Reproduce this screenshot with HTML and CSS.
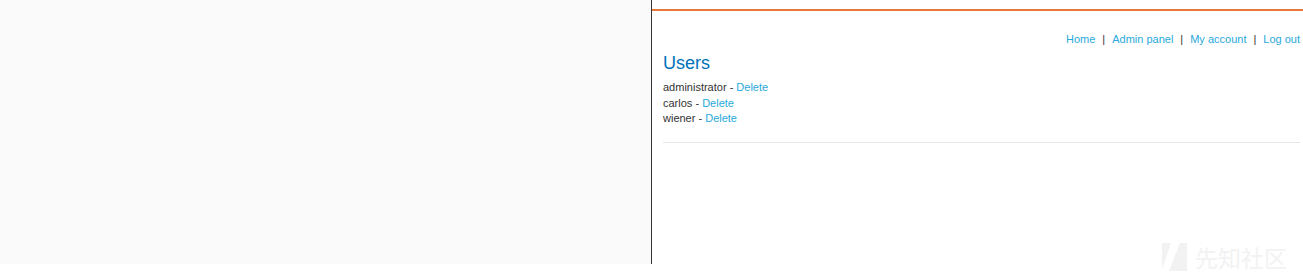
FILE: index.html
```html
<!DOCTYPE html>
<html lang="en">
<head>
    <meta charset="UTF-8">
    <title>Users</title>
    <link rel="stylesheet" href="styles.css">
</head>
<body>
    <div class="frame">
        <div class="side"></div>
        <div class="main">
            <div class="top-bar"></div>
            <div class="content">
                <div class="nav">
                    <a href="#">Home</a><span class="sep">|</span><a href="#">Admin panel</a><span class="sep">|</span><a href="#">My account</a><span class="sep">|</span><a href="#">Log out</a>
                </div>
                <h1>Users</h1>
                <div class="user">administrator - <a href="#">Delete</a></div>
                <div class="user">carlos - <a href="#">Delete</a></div>
                <div class="user">wiener - <a href="#">Delete</a></div>
                <hr>
            </div>
        </div>
    </div>
    <div class="watermark">
        <svg class="mark-logo" width="25" height="28" viewBox="0 0 25 28">
            <polygon points="0,0 9,0 0,26" fill="#f2f2f2"/>
            <polygon points="18,0 25,0 25,28 7,28" fill="#f2f2f2"/>
        </svg>
        <span>先知社区</span>
    </div>
</body>
</html>
```

FILE: styles.css
```css
* {
    box-sizing: border-box;
    margin: 0;
    padding: 0;
}

body {
    font-family: "Liberation Sans", Arial, sans-serif;
    background-color: #fff;
    width: 1303px;
    height: 274px;
    overflow: hidden;
    position: relative;
}

.frame {
    display: flex;
    height: 264px;
}

.side {
    width: 652px;
    background-color: #fafafa;
    border-right: 1px solid #333;
}

.main {
    flex: 1;
    padding-top: 9px;
}

.top-bar {
    height: 2px;
    background-color: #e8773b;
}

.content {
    padding: 21px 3px 0 11px;
}

a {
    color: #29a9db;
    text-decoration: none;
}

.nav {
    text-align: right;
    font-size: 11px;
    line-height: 14px;
    color: #333;
}

.sep {
    margin: 0 7px;
}

h1 {
    font-size: 18px;
    font-weight: normal;
    color: #0071bc;
    line-height: 22px;
    margin-top: 6px;
    margin-bottom: 6px;
}

.user {
    font-size: 11px;
    line-height: 15.5px;
    color: #333;
}

hr {
    border: none;
    border-top: 1px solid #e6e6e6;
    margin-top: 15px;
}

.watermark {
    position: absolute;
    left: 1162px;
    top: 243px;
    font-family: "Noto Sans CJK SC", sans-serif;
    font-size: 23px;
    line-height: 28px;
    color: #f2f2f2;
    display: flex;
    align-items: center;
    gap: 8px;
}
```
